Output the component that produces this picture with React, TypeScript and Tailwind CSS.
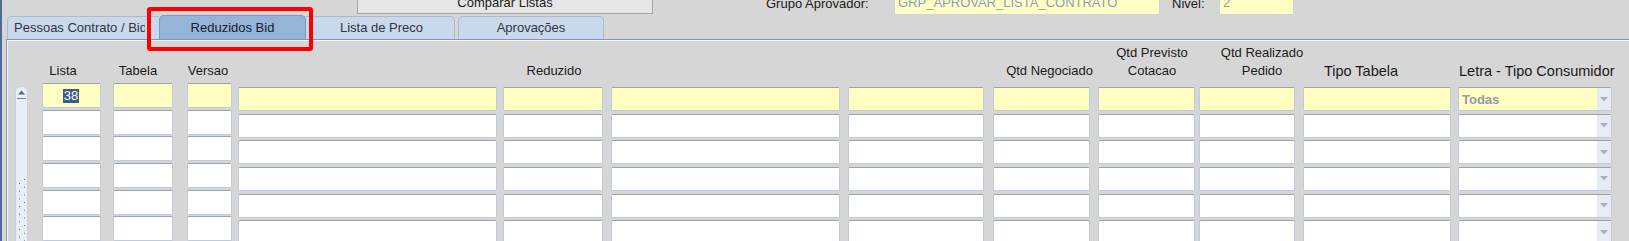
import React from "react";

const ROWS = [0, 1, 2, 3, 4, 5];

type Col = {
  w: number;
  ml: number;
  group: "L" | "R";
  kind?: "lista" | "dd";
  head?: React.ReactNode;
  headCls?: string;
};

const cols: Col[] = [
  { w: 59, ml: 14, group: "L", kind: "lista", head: <span>Lista</span>, headCls: "items-center pr-[17px]" },
  { w: 60, ml: 12, group: "L", head: <span>Tabela</span>, headCls: "items-center pr-[10px]" },
  { w: 45, ml: 14, group: "L", head: <span>Versao</span>, headCls: "items-center pr-[3px]" },
  { w: 259, ml: 6, group: "R" },
  { w: 100, ml: 6, group: "R", head: <span>Reduzido</span>, headCls: "items-center pl-[2px]" },
  { w: 229, ml: 8, group: "R" },
  { w: 136, ml: 8, group: "R" },
  { w: 97, ml: 9, group: "R", head: <span>Qtd Negociado</span>, headCls: "items-center pl-[16px]" },
  {
    w: 97,
    ml: 8,
    group: "R",
    head: (
      <>
        <span>Qtd Previsto</span>
        <span>Cotacao</span>
      </>
    ),
    headCls: "items-center pl-[11px]",
  },
  {
    w: 96,
    ml: 4,
    group: "R",
    head: (
      <>
        <span>Qtd Realizado</span>
        <span>Pedido</span>
      </>
    ),
    headCls: "items-center pl-[30px]",
  },
  {
    w: 148,
    ml: 8,
    group: "R",
    head: <span className="text-[14.5px]">Tipo Tabela</span>,
    headCls: "items-center pr-[32px]",
  },
  {
    w: 154,
    ml: 7,
    group: "R",
    kind: "dd",
    head: <span className="text-[14.5px]">Letra - Tipo Consumidor</span>,
    headCls: "items-start pl-[1px]",
  },
];

function Field({
  h,
  yellow,
  kind,
}: {
  h: number;
  yellow: boolean;
  kind?: "lista" | "dd";
}) {
  return (
    <div
      className={
        "box-border flex w-full shrink-0 overflow-hidden rounded-[2px] border border-[#bccbe0] border-t-[#9ca3ae] " +
        (yellow ? "bg-[#ffffc2]" : "bg-white") +
        (h === 25 ? " h-[25px]" : " h-[24px]")
      }
    >
      {kind === "lista" && yellow ? (
        <div className="flex flex-1 items-center justify-center pr-[1px]">
          <span className="bg-[#3b5a8a] px-[0.5px] text-[13px] leading-[14px] text-white">38</span>
        </div>
      ) : kind === "dd" ? (
        <>
          <div className="flex flex-1 items-center pl-[3px] text-[13px] font-bold leading-[15px] text-[#9599ab]">
            {yellow ? "Todas" : ""}
          </div>
          <div className="flex w-[14px] shrink-0 items-center justify-center bg-[#e7ebf2]">
            <svg width="8" height="5" viewBox="0 0 8 5">
              <path d="M0 0 L8 0 L4 4.5 Z" fill="#aab0bb" />
            </svg>
          </div>
        </>
      ) : null}
    </div>
  );
}

function ScrollBar() {
  const marks = [0, 1, 2, 3, 4, 5, 6, 7, 8];
  return (
    <div className="relative box-border h-[200px] w-[13px] rounded-t-[6px] border border-[#c7d3e3] bg-[#e8eef6]">
      <svg width="11" height="198" viewBox="0 0 11 198" className="block">
        <path d="M2 7.5 L9 7.5 L5.5 3.5 Z" fill="#5f6676" />
        <rect x="1" y="11" width="9" height="1" fill="#7a8190" />
        {marks.map((i) => {
          const y = 91 + i * 7.67;
          return (
            <g key={i}>
              <rect x="8" y={y + 1} width="1" height="1" fill="#6d7484" />
              <rect x="9" y={y} width="1" height="1" fill="#ffffff" />
              <rect x="3" y={y + 5} width="1" height="1" fill="#6d7484" />
              <rect x="4" y={y + 4} width="1" height="1" fill="#ffffff" />
            </g>
          );
        })}
      </svg>
    </div>
  );
}

export default function App() {
  return (
    <div className="relative flex h-[241px] w-[1629px] overflow-hidden bg-[#d6d6d6] font-['Liberation_Sans',Arial,sans-serif] text-[13px] text-[#1a1a1a]">
      <div className="h-full w-[2px] shrink-0 bg-[#4d6b96]" />
      <div className="flex min-w-0 flex-1 flex-col">
        {/* top bar */}
        <div className="flex h-[16px] shrink-0 items-end">
          <div className="mb-[2px] ml-[355px] box-border flex h-[24px] w-[296px] shrink-0 items-center justify-center border border-[#a4a4a4] bg-[#e6e6e6] leading-[15px] text-[#1a1a1a]">
            Comparar Listas
          </div>
          <div className="mb-[5px] ml-[113px] w-[124px] shrink-0 whitespace-nowrap leading-[15px]">
            Grupo Aprovador:
          </div>
          <div className="mb-[1px] ml-[4px] box-border h-[22px] w-[266px] shrink-0 rounded-[2px] border border-[#c9d3e2] bg-[#ffffc2] pl-[3px] pt-[1px] leading-[15px] text-[#8d9dc8]">
            GRP_APROVAR_LISTA_CONTRATO
          </div>
          <div className="mb-[5px] ml-[12px] w-[47px] shrink-0 whitespace-nowrap leading-[15px]">
            Nivel:
          </div>
          <div className="mb-[1px] box-border h-[22px] w-[75px] shrink-0 rounded-[2px] border border-[#c9d3e2] bg-[#ffffc2] pl-[3px] pt-[1px] leading-[15px] text-[#8d9dc8]">
            2
          </div>
        </div>

        {/* tabs */}
        <div className="ml-[5px] flex h-[23px] shrink-0 items-end">
          <div className="box-border h-[23px] w-[152px] shrink-0 rounded-tl-[5px] border-l border-t border-[#a9bcd5] bg-[#c9d8ea] pl-[6px]">
            <div className="w-[131px] overflow-hidden whitespace-nowrap leading-[22px] text-[#333344]">
              Pessoas Contrato / Bid
            </div>
          </div>
          <div className="box-border h-[24px] w-[147px] shrink-0 rounded-t-[5px] border border-b-0 border-[#7f9abd] bg-[#94b5d9] pt-[1px] text-center leading-[22px] text-[#1a1a2a]">
            Reduzidos Bid
          </div>
          <div className="box-border h-[23px] w-[149px] shrink-0 rounded-tr-[5px] border-r border-t border-[#a9bcd5] bg-[#c9d8ea] pl-[3px] text-center leading-[22px] text-[#333344]">
            Lista de Preco
          </div>
          <div className="ml-[3px] box-border h-[23px] w-[146px] shrink-0 rounded-t-[5px] border-l border-r border-t border-[#a9bcd5] bg-[#c9d8ea] text-center leading-[22px] text-[#333344]">
            Aprovações
          </div>
        </div>

        {/* panel */}
        <div className="ml-[4px] flex flex-1 flex-col border-l border-t border-[#8097ba]">
          <div className="flex flex-1 flex-col border-l border-t border-[#f3f5f9]">
            <div className="mt-[3px] flex items-start">
              {/* scrollbar column */}
              <div className="ml-[7px] flex w-[13px] shrink-0 flex-col">
                <div className="h-[36px]" />
                <div className="mt-[6px]">
                  <ScrollBar />
                </div>
              </div>
              {cols.map((c, ci) => (
                <div
                  key={ci}
                  className="flex shrink-0 flex-col"
                  style={{ width: c.w, marginLeft: c.ml }}
                >
                  <div
                    className={
                      "flex h-[36px] flex-col justify-end whitespace-nowrap leading-[18px] " +
                      (c.headCls ?? "")
                    }
                  >
                    {c.head}
                  </div>
                  {c.group === "L" ? (
                    <div className="mt-[3px] flex flex-col gap-[1.67px]">
                      {ROWS.map((r) => (
                        <Field key={r} h={25} yellow={r === 0} kind={c.kind} />
                      ))}
                    </div>
                  ) : (
                    <div className="mt-[7px] flex flex-col gap-[2.67px]">
                      {ROWS.map((r) => (
                        <Field key={r} h={24} yellow={r === 0} kind={c.kind} />
                      ))}
                    </div>
                  )}
                </div>
              ))}
            </div>
          </div>
        </div>
      </div>

      {/* red annotation box */}
      <div className="pointer-events-none absolute left-[147px] top-[7px] box-border h-[44px] w-[166px] rounded-[3px] border-4 border-[#ff0000]" />
    </div>
  );
}
